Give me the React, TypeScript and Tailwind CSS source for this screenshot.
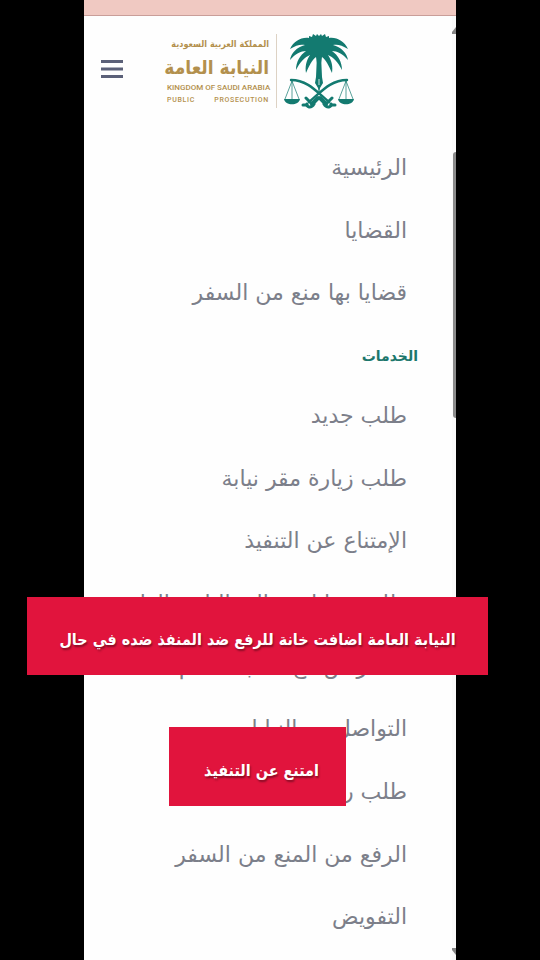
type MenuItem = {
  label: string;
  href: string;
};

const mainLinks: MenuItem[] = [
  { label: "الرئيسية", href: "#home" },
  { label: "القضايا", href: "#cases" },
  { label: "قضايا بها منع من السفر", href: "#travel-ban-cases" },
];

const serviceLinks: MenuItem[] = [
  { label: "طلب جديد", href: "#new-request" },
  { label: "طلب زيارة مقر نيابة", href: "#visit" },
  { label: "الإمتناع عن التنفيذ", href: "#non-execution" },
  { label: "طلب مقابلة معالي النائب العام", href: "#attorney-general" },
  { label: "الاعتراض مع طلب الحكم", href: "#objection" },
  { label: "التواصل مع النيابات", href: "#contact" },
  { label: "طلب رد اعتبار", href: "#rehabilitation" },
  { label: "الرفع من المنع من السفر", href: "#lift-ban" },
  { label: "التفويض", href: "#delegation" },
];

function Emblem() {
  return (
    <svg viewBox="0 0 70 76" className="h-[76px] w-[70px] shrink-0" fill="#137a70" aria-hidden="true">
      {/* palm fronds */}
      <path d="M35 3 L37 1 L38 3 L41 1 L42 4 L45 3 L45 5 C53 4 60 8 64 16 C58 12 53 11 49 12 C57 14 63 20 64 27 C59 21 53 18 48 18 C54 22 58 29 58 37 C54 29 49 24 44 22 C48 28 49 34 48 40 C45 33 42 27 38 24 L37 30 H33 L32 24 C28 27 25 33 22 40 C21 34 22 28 26 22 C21 24 16 29 12 37 C12 29 16 22 22 18 C17 18 11 21 6 27 C7 20 13 14 21 12 C17 11 12 12 6 16 C10 8 17 4 25 5 L25 3 L28 4 L29 1 L32 3 L33 1 Z" />
      {/* trunk */}
      <path d="M33 22 H37 L38 44 L39 50 L36 55 L35 61 L34 55 L31 50 L32 44 Z" />
      <path d="M35 46 V52" stroke="#fefefe" strokeWidth="0.8" />
      {/* crossed swords */}
      <g fill="none" stroke="#137a70" strokeLinecap="round">
        <path d="M7 47 C23 47 32 58 45 69" strokeWidth="2.4" />
        <path d="M63 47 C47 47 38 58 25 69" strokeWidth="2.4" />
        <path d="M36 65 L42 71 M34 65 L28 71" strokeWidth="4" />
        <path d="M40 71 C43 76 48 74 47 71 M43 70 L48 65" strokeWidth="3" />
        <path d="M30 71 C27 76 22 74 23 71 M27 70 L22 65" strokeWidth="3" />
        <path d="M47 72 H51 M23 72 H19" strokeWidth="3" />
      </g>
      {/* scales */}
      <path d="M8 48 L1 66 M8 48 V66 M8 48 L15 66 M62 48 L55 66 M62 48 V66 M62 48 L69 66" stroke="#137a70" strokeWidth="0.7" fill="none" />
      <path d="M0 66 H16 C15 73 1 73 0 66 Z M54 66 H70 C69 73 55 73 54 66 Z" />
    </svg>
  );
}

function Logo() {
  return (
    <a href="#home" className="flex items-center gap-[7px]" aria-label="النيابة العامة">
      <Emblem />
      <span className="h-[74px] w-px bg-[#ddd2c4]" />
      <span className="flex w-[102px] flex-col font-['DejaVu_Sans_Condensed','DejaVu_Sans',sans-serif] whitespace-nowrap text-[#b3904d]">
        <span className="text-[9px] leading-4 font-bold">المملكة العربية السعودية</span>
        <span className="text-[19px] leading-[30px] font-bold">النيابة العامة</span>
        <span dir="ltr" className="font-['Roboto',sans-serif] text-[8px] leading-3 font-medium">
          KINGDOM OF SAUDI ARABIA
        </span>
        <span dir="ltr" className="flex justify-between font-['Roboto',sans-serif] text-[7px] leading-3 font-medium">
          <span className="tracking-widest">PUBLIC</span>
          <span className="tracking-widest">PROSECUTION</span>
        </span>
      </span>
    </a>
  );
}

function MenuLinks({ items, className }: { items: MenuItem[]; className: string }) {
  return (
    <ul className={`flex flex-col ${className}`}>
      {items.map((item) => (
        <li key={item.href} className="flex min-h-[60px] flex-1">
          <a href={item.href} className="flex items-center pr-[49px] text-[22px] whitespace-nowrap text-[#7c7f8a]">
            {item.label}
          </a>
        </li>
      ))}
    </ul>
  );
}

function Caption({ text, className }: { text: string; className: string }) {
  return (
    <p
      className={`absolute flex items-center justify-center bg-[#e1143d] pt-2 font-['DejaVu_Sans_Condensed','DejaVu_Sans',sans-serif] text-[16px] font-bold whitespace-nowrap text-white [text-shadow:1px_2px_2px_rgba(0,0,0,0.4)] ${className}`}
    >
      {text}
    </p>
  );
}

export default function App() {
  return (
    <div dir="rtl" className="relative flex min-h-screen flex-col bg-black px-[84px] font-['DejaVu_Sans',sans-serif]">
      <div className="relative flex flex-1 flex-col overflow-hidden bg-[#fefefe] pb-3">
        <div className="h-4 border-b border-[#c99e99] bg-[#f0c9c2]" />
        <header className="flex h-[120px] items-start justify-between pt-[17px] pr-[102px] pl-[17px]">
          <Logo />
          <button type="button" aria-label="القائمة" className="mt-[26px] text-[#5b6078]">
            <svg viewBox="0 0 22 20" className="h-5 w-[22px]" fill="currentColor" aria-hidden="true">
              <path d="M0 1 H22 V4 H0 Z M0 8.5 H22 V11.5 H0 Z M0 16 H22 V19 H0 Z" />
            </svg>
          </button>
        </header>
        <nav className="flex flex-1 flex-col">
          <MenuLinks items={mainLinks} className="flex-[3]" />
          <h2 className="flex min-h-[60px] flex-1 items-center pt-1 pr-[38px] text-[14px] font-bold text-[#1c776c]">
            الخدمات
          </h2>
          <MenuLinks items={serviceLinks} className="flex-[9]" />
        </nav>
        {/* scrollbar, cut off by the edge of the frame */}
        <div className="absolute top-4 right-0 bottom-0 w-1 bg-[#fafafa]" />
        <div className="absolute top-[152px] right-0 h-[266px] w-[3px] rounded-l-full bg-[#8b8b8b]" />
        <svg viewBox="0 0 4 8" className="absolute top-[27px] right-0 h-2 w-1" fill="#858585" aria-hidden="true">
          <path d="M4 0 V7 H0 V5 Z" />
        </svg>
        <svg viewBox="0 0 4 8" className="absolute right-0 bottom-[5px] h-2 w-1" fill="#858585" aria-hidden="true">
          <path d="M4 8 V1 H0 V3 Z" />
        </svg>
      </div>
      <Caption text="النيابة العامة اضافت خانة للرفع ضد المنفذ ضده في حال" className="top-[597px] right-[52px] left-[27px] h-[78px]" />
      <Caption text="امتنع عن التنفيذ" className="top-[727px] right-[194px] left-[169px] h-[79px] pr-4 pl-6" />
    </div>
  );
}
